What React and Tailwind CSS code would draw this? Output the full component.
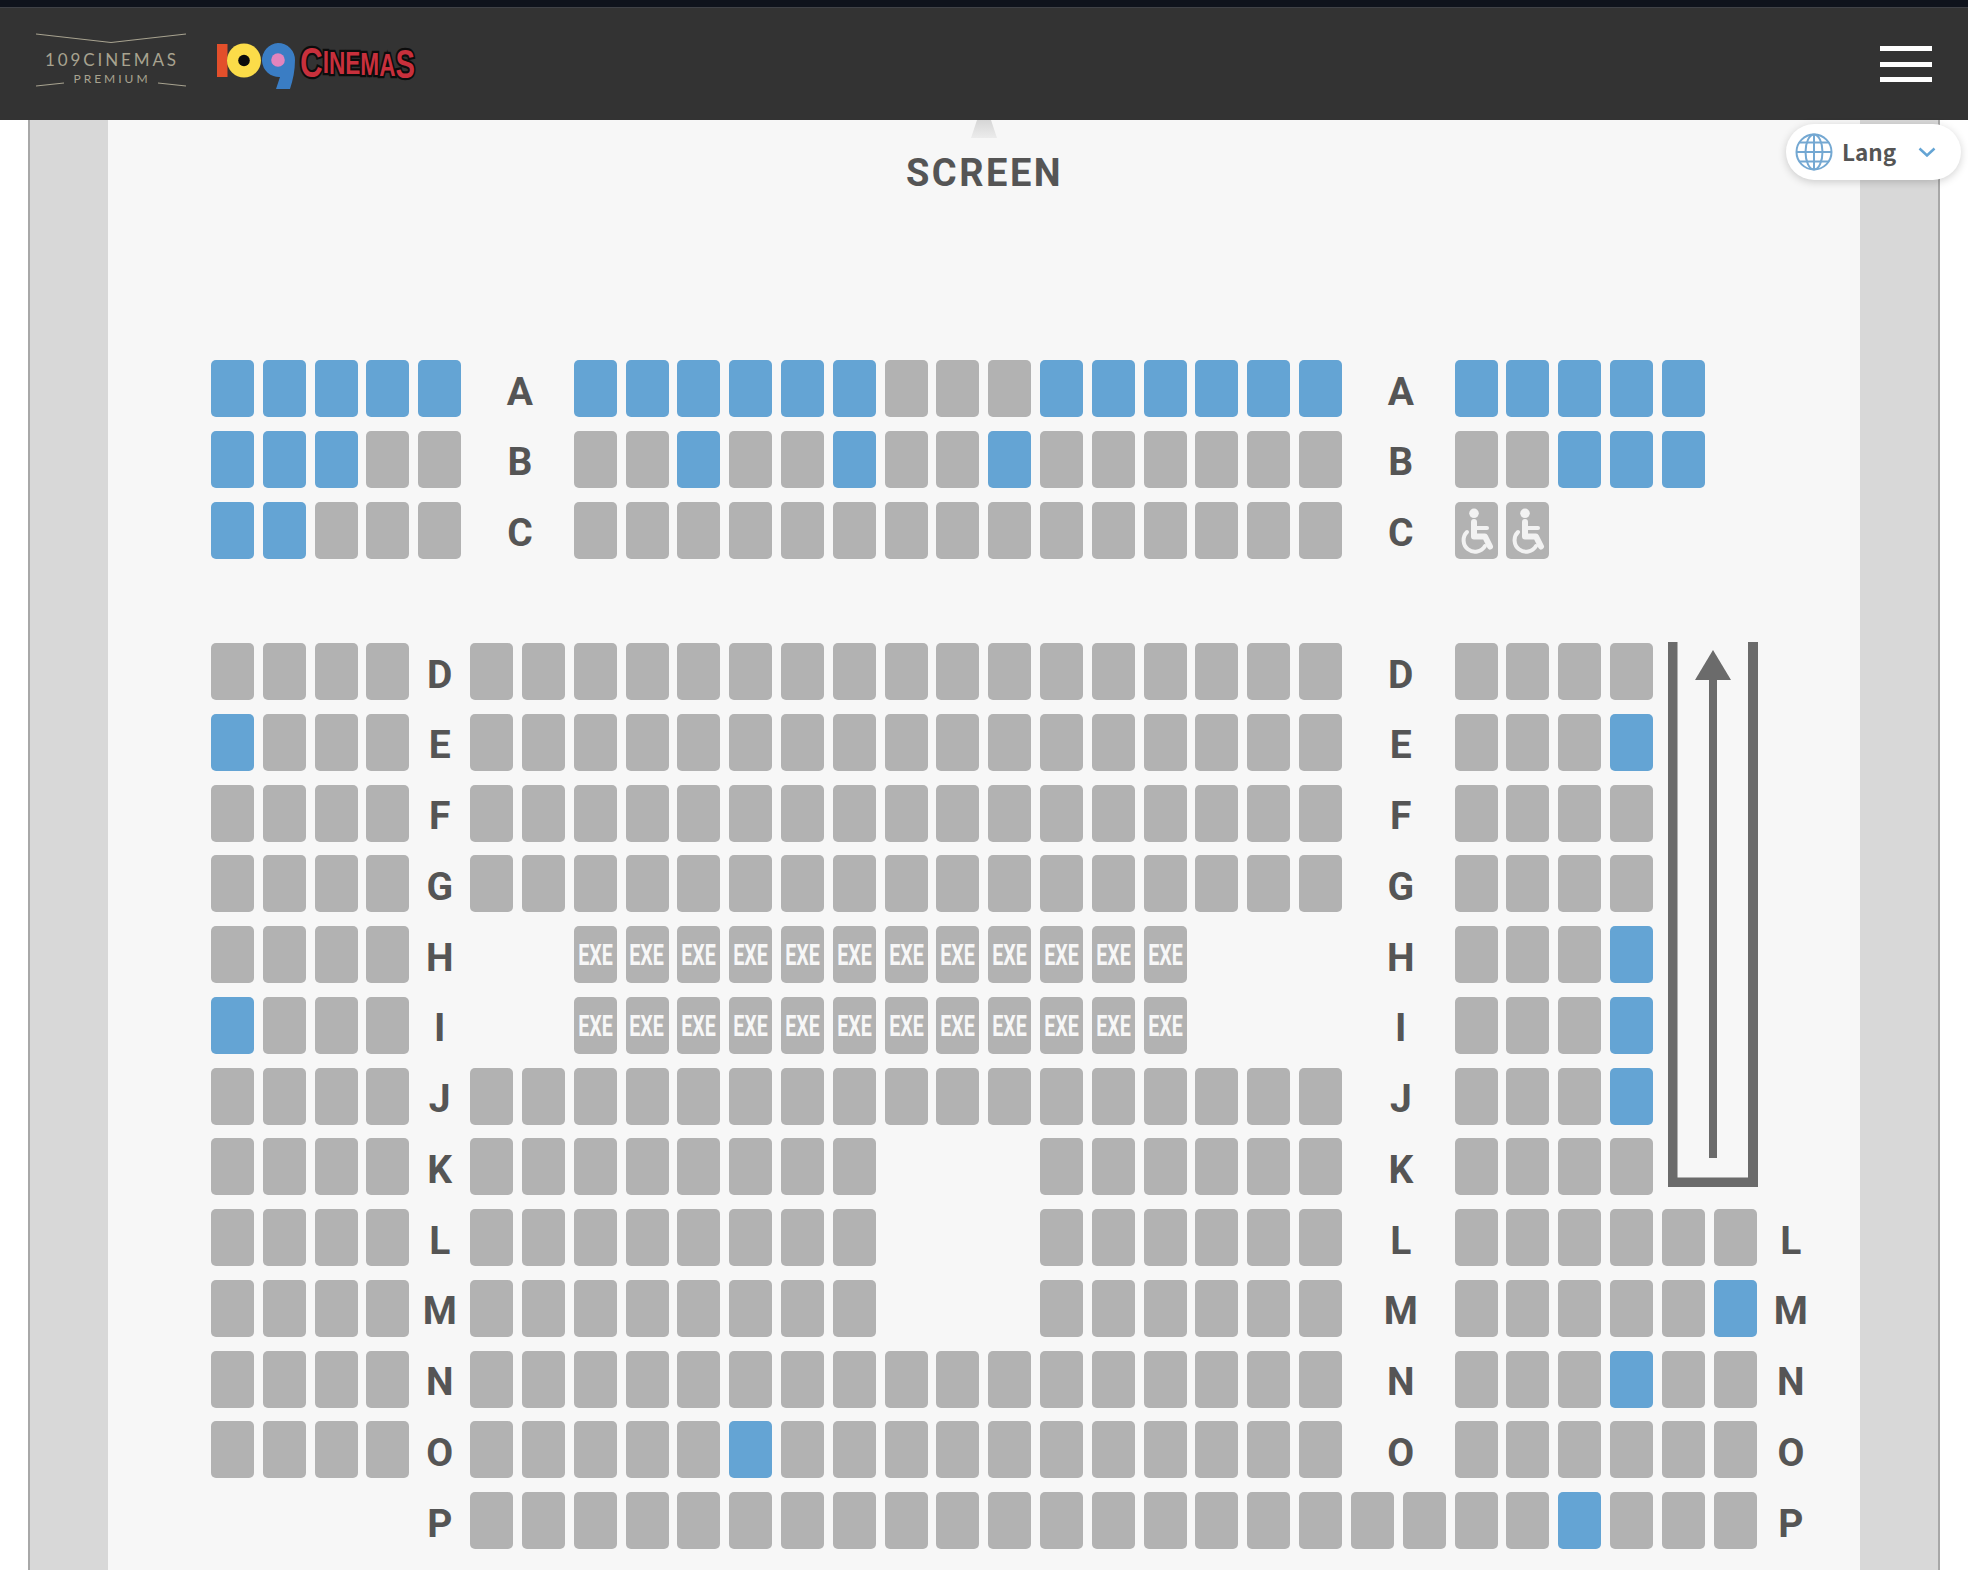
import React from "react"

// s seat, b taken (blue), x EXE, w wheelchair, _ empty, # covered by the aisle arrow
// L / R letter in one column, M letter across two columns (M is followed by a - that draws nothing)
const rows = [
  { label: "A", cells: "bbbbbM-bbbbbbsssbbbbbbM-bbbbb__" },
  { label: "B", cells: "bbbssM-ssbssbssbssssssM-ssbbb__" },
  { label: "C", cells: "bbsssM-sssssssssssssssM-ww_____" },
  { label: "", cells: "_______________________________" },
  { label: "D", cells: "ssssLsssssssssssssssssM-ssss##_" },
  { label: "E", cells: "bsssLsssssssssssssssssM-sssb##_" },
  { label: "F", cells: "ssssLsssssssssssssssssM-ssss##_" },
  { label: "G", cells: "ssssLsssssssssssssssssM-ssss##_" },
  { label: "H", cells: "ssssL__xxxxxxxxxxxx___M-sssb##_" },
  { label: "I", cells: "bsssL__xxxxxxxxxxxx___M-sssb##_" },
  { label: "J", cells: "ssssLsssssssssssssssssM-sssb##_" },
  { label: "K", cells: "ssssLssssssss___ssssssM-ssss##_" },
  { label: "L", cells: "ssssLssssssss___ssssssM-ssssssR" },
  { label: "M", cells: "ssssLssssssss___ssssssM-sssssbR" },
  { label: "N", cells: "ssssLsssssssssssssssssM-sssbssR" },
  { label: "O", cells: "ssssLsssssbsssssssssssM-ssssssR" },
  { label: "P", cells: "____LsssssssssssssssssssssbsssR" },
]

function Wheelchair() {
  return (
    <svg viewBox="0 0 43 57" className="w-full h-full" fill="none">
      <circle cx="19" cy="11.300" r="4.800" fill="#f2f2f2" />
      <path d="M19 20v14.500h11l5 10" stroke="#f2f2f2" strokeWidth="6" strokeLinecap="round" strokeLinejoin="round" />
      <path d="M21 26h11" stroke="#f2f2f2" strokeWidth="4" strokeLinecap="round" />
      <path d="M12 30a11.500 11.500 0 1 0 18 14" stroke="#f2f2f2" strokeWidth="4" strokeLinecap="round" />
    </svg>
  )
}

function Seat({ type }) {
  if (type === "b") return <div className="rounded-[5px] bg-[#64a4d4]" />
  if (type === "x") {
    return (
      <div className="rounded-[5px] bg-[#b2b2b2] flex items-center justify-center overflow-hidden pt-[2px]">
        <span className="font-['Roboto',sans-serif] font-bold text-[29px] leading-none text-[#f7f7f7] scale-x-[0.68]">
          EXE
        </span>
      </div>
    )
  }
  if (type === "w") {
    return (
      <div className="rounded-[5px] bg-[#b2b2b2]">
        <Wheelchair />
      </div>
    )
  }
  return <div className="rounded-[5px] bg-[#b2b2b2]" />
}

function RowLabel({ text, className }) {
  return (
    <div
      className={`flex items-center justify-center pt-[7px] font-['Roboto',sans-serif] font-bold text-[39px] leading-none text-[#555555] ${className}`}
    >
      {text}
    </div>
  )
}

function SeatRow({ row }) {
  const out = []
  row.cells.split("").forEach((c, i) => {
    if (c === "#" || c === "-") return
    if (c === "L") out.push(<RowLabel key={i} text={row.label} className="" />)
    else if (c === "M") out.push(<RowLabel key={i} text={row.label} className="col-span-2 pl-[5px]" />)
    else if (c === "R") out.push(<RowLabel key={i} text={row.label} className="pl-[8px]" />)
    else if (c === "_") out.push(<div key={i} />)
    else out.push(<Seat key={i} type={c} />)
  })
  return out
}

function AisleArrow() {
  return (
    <svg
      viewBox="0 0 90 545"
      className="col-start-29 col-span-2 row-start-5 row-span-8 w-[90px] h-[545px] ml-[6px] -mt-[1px] overflow-visible"
      fill="#6b6b6b"
    >
      <path d="M0 0h9.500v535.500h70.500V0h10v545H0z" />
      <rect x="41" y="38" width="8" height="478" />
      <path d="M45 8L63 38H27z" />
    </svg>
  )
}

function PremiumLogo() {
  return (
    <div className="relative w-[152px] h-[54px] -mt-[8px] text-[#a8a390]">
      <svg viewBox="0 0 152 54" className="absolute inset-0 w-full h-full" fill="none" stroke="#a8a390" strokeWidth="1.200">
        <path d="M0 1L75 9.500L150 1" />
        <path d="M0 53L28 50M122 50L150 53" />
      </svg>
      <div className="absolute left-0 right-0 top-[17px] text-center font-['Lato',sans-serif] text-[17px] leading-5 tracking-[2.900px]">
        109CINEMAS
      </div>
      <div className="absolute left-0 right-0 top-[38px] text-center font-['Lato',sans-serif] text-[12px] leading-4 tracking-[3px]">
        PREMIUM
      </div>
    </div>
  )
}

function CinemasLogo() {
  return (
    <svg viewBox="0 0 204 48" className="w-[204px] h-[48px] overflow-visible">
      <rect x="3" y="1" width="10.500" height="33" fill="#e34f2b" />
      <circle cx="30" cy="17.500" r="17" fill="#fbdc49" />
      <circle cx="30" cy="17.500" r="5.800" fill="#0b0b0b" />
      <path d="M64 0a17 17 0 0 1 17 17c0 10-2 20-5 29H62l4-12a17 17 0 0 1-2-34z" fill="#3a7dc4" />
      <circle cx="64" cy="17" r="6.800" fill="#e184bd" />
      <g transform="translate(86 0) scale(0.73 1)">
        <text
          x="0"
          y="34 30 31 31 32 33 35"
          fontFamily="'Liberation Sans', sans-serif"
          fontWeight="700"
          fill="#c8303c"
          stroke="#0c0c0c"
          strokeWidth="4.500"
          paintOrder="stroke"
        >
          <tspan fontSize="43">C</tspan>
          <tspan fontSize="31">INEMA</tspan>
          <tspan fontSize="40">S</tspan>
        </text>
      </g>
    </svg>
  )
}

function Header() {
  return (
    <div className="shrink-0">
      <div className="h-[7px] bg-[#0f131c]" />
      <div className="h-[113px] bg-[#333333] border-t border-[#404247] flex items-center pl-[36px] pr-[36px]">
        <PremiumLogo />
        <div className="ml-[26px] mt-[6px]">
          <CinemasLogo />
        </div>
        <div className="ml-auto flex flex-col gap-[10.500px] w-[52px]">
          <div className="h-[5px] bg-white" />
          <div className="h-[5px] bg-white" />
          <div className="h-[5px] bg-white" />
        </div>
      </div>
    </div>
  )
}

function LangButton() {
  return (
    <div className="absolute left-[1786px] top-[124px] w-[175px] h-[56px] rounded-[28px] bg-white shadow-[0_2px_8px_rgba(0,0,0,0.18)] flex items-center pl-[9px]">
      <svg viewBox="0 0 38 38" className="w-[38px] h-[38px]" fill="none" stroke="#74a8d2" strokeWidth="2">
        <circle cx="19" cy="19" r="17.500" />
        <ellipse cx="19" cy="19" rx="8.500" ry="17.500" />
        <path d="M19 1.500v35M1.500 19h35M4.500 9.500h29M4.500 28.500h29" />
      </svg>
      <span className="ml-[9px] -mt-[2px] font-['Noto_Sans_CJK_JP',sans-serif] font-bold text-[22.500px] leading-none text-[#555555]">
        Lang
      </span>
      <svg viewBox="0 0 18 10" className="w-[18px] h-[10px] ml-[22px]" fill="none" stroke="#64a4d4" strokeWidth="2.500">
        <path d="M1.500 1.500L9 8.500L16.500 1.500" />
      </svg>
    </div>
  )
}

function App() {
  return (
    <div className="relative w-[1968px] h-[1570px] overflow-hidden bg-white flex flex-col">
      <Header />
      <div className="flex-1 mx-[28px] border-x-2 border-[#a8a8a8] bg-[#d8d8d8] px-[78px]">
        <div className="h-full bg-[#f7f7f7]">
          <div className="h-[72px] flex flex-col items-center">
            <svg viewBox="0 0 26 18" className="w-[26px] h-[18px] shrink-0">
              <defs>
                <linearGradient id="screenFade" x1="0" y1="0" x2="0" y2="1">
                  <stop offset="0" stopColor="#d6d6d6" />
                  <stop offset="1" stopColor="#ececec" />
                </linearGradient>
              </defs>
              <path d="M6 0h14l6 18H0z" fill="url(#screenFade)" />
            </svg>
            <div className="mt-[16px] pl-[1px] font-['Roboto',sans-serif] font-bold text-[38px] leading-[38px] tracking-[2.500px] text-[#555555]">
              SCREEN
            </div>
          </div>
          <div className="mt-[168px] pl-[103px] grid grid-cols-[repeat(31,43px)] grid-rows-[repeat(17,57px)] gap-x-[8.820px] gap-y-[13.780px]">
            <AisleArrow />
            {rows.map((row, i) => (
              <SeatRow key={i} row={row} />
            ))}
          </div>
        </div>
      </div>
      <LangButton />
    </div>
  )
}

export default App
